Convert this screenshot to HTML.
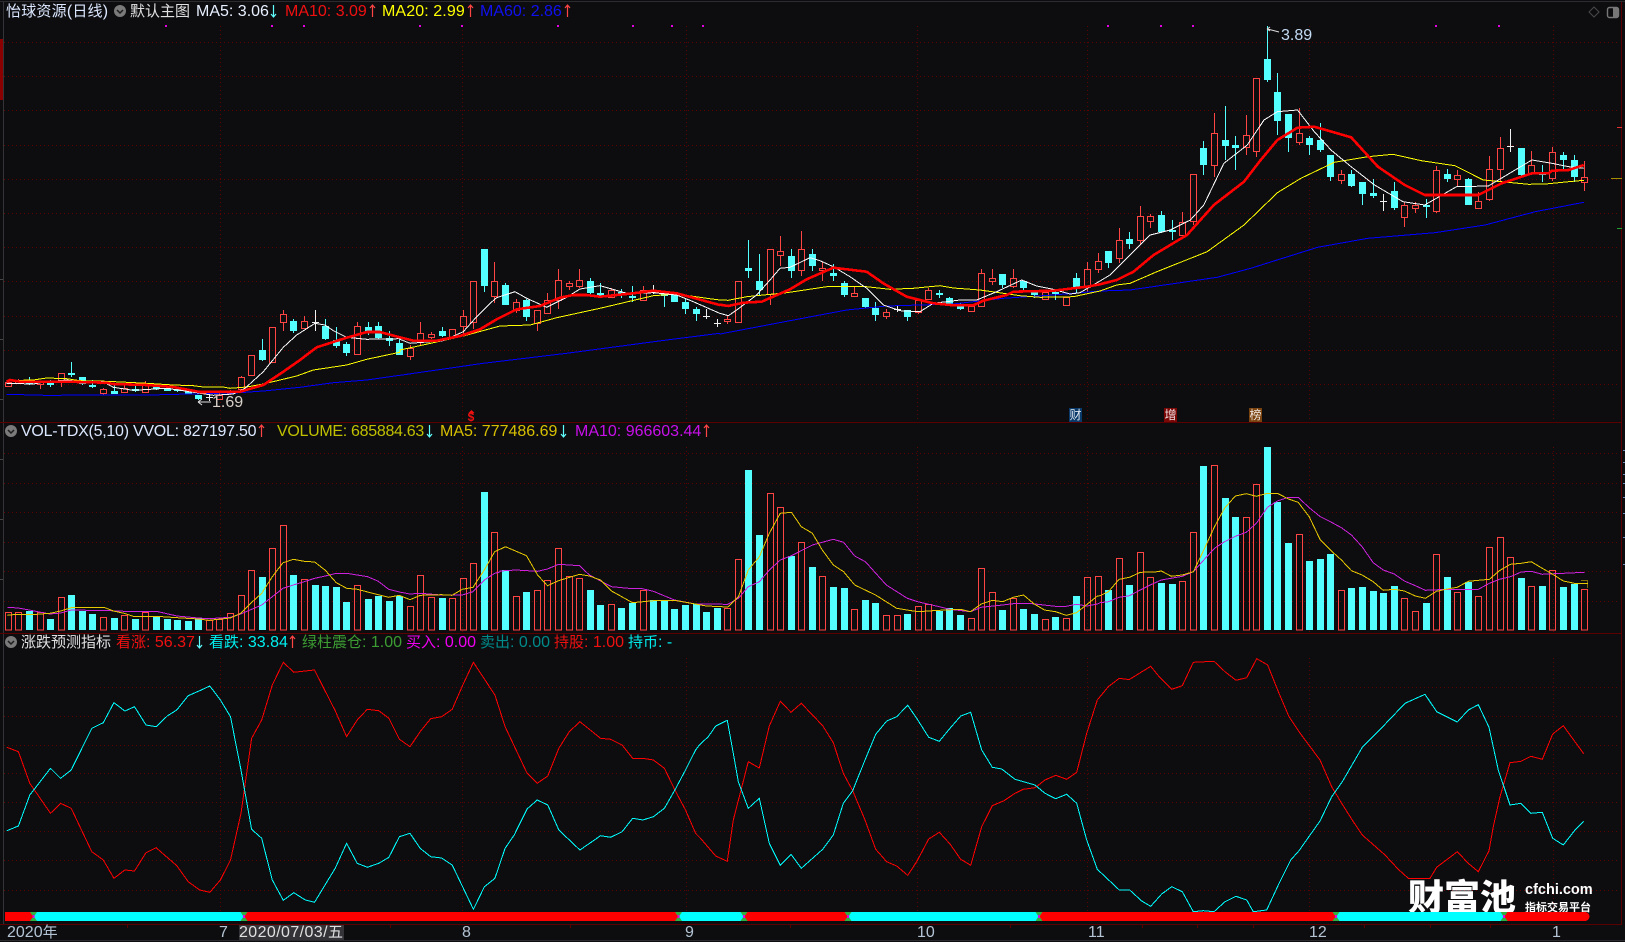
<!DOCTYPE html>
<html><head><meta charset="utf-8"><title>K线</title>
<style>
html,body{margin:0;padding:0;background:#0d0d10;width:1625px;height:942px;overflow:hidden}
#w{position:relative;width:1625px;height:942px;overflow:hidden;font-family:"Liberation Sans","Noto Sans CJK SC",sans-serif;font-size:16px}
svg{position:absolute;left:0;top:0}
.t{position:absolute;white-space:nowrap;line-height:18px;height:18px}
.t i{font-style:normal;font-size:15px}
.ax{color:#b4c4d4}
</style></head><body><div id="w">
<svg id="s" width="1625" height="942" viewBox="0 0 1625 942"></svg>
<div class="t" style="left:6px;top:3px;color:#dce8ff;letter-spacing:.2px"><i>怡球资源</i>(<i>日线</i>)</div>
<div class="t" style="left:130px;top:3px;color:#e0e0e0"><i>默认主图</i></div>
<div class="t" style="left:196px;top:3px;color:#e8f0ff">MA5: 3.06</div>
<div class="t" style="left:285px;top:3px;color:#f01010">MA10: 3.09</div>
<div class="t" style="left:382px;top:3px;color:#ffff00;letter-spacing:.1px">MA20: 2.99</div>
<div class="t" style="left:480px;top:3px;color:#1010f0">MA60: 2.86</div>
<div class="t" style="left:21px;top:423px;color:#dce8ff;letter-spacing:-.26px">VOL-TDX(5,10) VVOL: 827197.50</div>
<div class="t" style="left:277px;top:423px;color:#c0c000;letter-spacing:-.3px">VOLUME: 685884.63</div>
<div class="t" style="left:440px;top:423px;color:#d8c000">MA5: 777486.69</div>
<div class="t" style="left:575px;top:423px;color:#c810e8">MA10: 966603.44</div>
<div class="t" style="left:21px;top:634px;color:#e0e0e0"><i>涨跌预测指标</i></div>
<div class="t" style="left:116px;top:634px;color:#f01010"><i>看涨</i>: 56.37</div>
<div class="t" style="left:209px;top:634px;color:#00f0f0"><i>看跌</i>: 33.84</div>
<div class="t" style="left:302px;top:634px;color:#3c9c32"><i>绿柱震仓</i>: 1.00</div>
<div class="t" style="left:406px;top:634px;color:#f000f0"><i>买入</i>: 0.00</div>
<div class="t" style="left:480px;top:634px;color:#008a8a"><i>卖出</i>: 0.00</div>
<div class="t" style="left:554px;top:634px;color:#f01010"><i>持股</i>: 1.00</div>
<div class="t" style="left:628px;top:634px;color:#00f0f0"><i>持币</i>: -</div>
<div class="t" style="left:1281px;top:27px;color:#c4dcf4">3.89</div>
<div class="t" style="left:212px;top:394px;color:#d8d0c8">1.69</div>
<div class="t" style="left:471px;top:408px;color:#f01010;font-size:12px;font-weight:bold;transform:translateX(-50%)">$</div>
<div class="t" style="left:1069px;top:408px;width:13px;height:14px;line-height:14px;text-align:center;background:#0a3a6a;color:#e0e8f0;font-size:12px">财</div>
<div class="t" style="left:1164px;top:408px;width:13px;height:14px;line-height:14px;text-align:center;background:#7a0606;color:#f0e0e0;font-size:12px">增</div>
<div class="t" style="left:1249px;top:408px;width:13px;height:14px;line-height:14px;text-align:center;background:#7a420e;color:#f0e8e0;font-size:12px">榜</div>
<div class="t" style="left:1408px;top:875px;height:40px;line-height:40px;color:#fff;font-size:36px;font-weight:900;font-family:'Noto Sans CJK SC',sans-serif;z-index:1">财富池</div>
<div class="t" style="left:1525px;top:881px;color:#fff;font-size:14.5px;font-weight:bold;z-index:1">cfchi.com</div>
<div class="t" style="left:1525px;top:898px;color:#fff;font-size:11px;font-weight:bold;font-family:'Noto Sans CJK SC',sans-serif;z-index:1">指标交易平台</div>
<svg id="b" width="1625" height="942" viewBox="0 0 1625 942" style="z-index:2"></svg>
<div class="t ax" style="left:7px;top:924px;z-index:3">2020<i>年</i></div>
<div class="t ax" style="left:219px;top:924px;z-index:3">7</div>
<div class="t" style="left:239px;top:925px;width:105px;height:15px;line-height:15px;background:#333338;color:#e0e0e0;z-index:3;letter-spacing:.4px">2020/07/03/<i>五</i></div>
<div class="t ax" style="left:462px;top:924px;z-index:3">8</div>
<div class="t ax" style="left:685px;top:924px;z-index:3">9</div>
<div class="t ax" style="left:917px;top:924px;z-index:3">10</div>
<div class="t ax" style="left:1088px;top:924px;z-index:3">11</div>
<div class="t ax" style="left:1309px;top:924px;z-index:3">12</div>
<div class="t ax" style="left:1552px;top:924px;z-index:3">1</div>
<script>
var X=function(i){return 7.8+10.58*i};
var s=document.getElementById('s'),b=document.getElementById('b');
var out=[],bo=[];
function P(d,st,w,extra,arr){(arr||out).push('<path d="'+d+'" fill="none" stroke="'+st+'" stroke-width="'+w+'" shape-rendering="crispEdges" '+(extra||'')+'/>')}
function F(d,f,arr){(arr||out).push('<path d="'+d+'" fill="'+f+'" shape-rendering="crispEdges"/>')}
// grid
var g='',gy=[];
for(var k=0;k<=10;k++)gy.push(42+34.2*k);
[453,482.6,512,541.5,571,600.5,686.7,715.6,744.5,773.4,802.3,831.2,860.1,890].forEach(function(y){gy.push(y)});
gy.forEach(function(y){g+='M4 '+(Math.round(y)+.5)+'H1620'});
P(g,'#5c0000',1,'stroke-dasharray="1 3"');
var v='';
[219.5,462,685.5,917,1087,1309,1552.7].forEach(function(x){var a=Math.round(x)+.5;v+='M'+a+' 26V422M'+a+' 447V633M'+a+' 658V912'});
P(v,'#5c0000',1,'stroke-dasharray="1 3"');
// borders
P('M0 1.5H1625M0 940.5H1625','#2c2c30',1);
P('M3.5 2V924','#333338',1);
P('M0 422.5H1622M0 633.5H1622M0 924.5H1622M1621.5 2V924','#5a0000',1);
F('M0 39h3v61h-3z','#8a0000');
P('M0 279.5h3M0 339.5h3M0 399.5h3M0 459.5h3M0 519.5h3M0 579.5h3','#444',1);
P('M127.5 924v4M315.5 924v4M390.5 924v4M570.5 924v4M790.5 924v4M1010.5 924v4M1142.5 924v4M1197.5 924v4M1253.5 924v4M1364.5 924v4M1430.5 924v4M1490.5 924v4','#5a0000',1);
P('M1623 450.5h2M1623 462.5h2M1623 474.5h2M1623 483.5h2M1623 497.5h2M1623 513.5h2M1623 537.5h2M1623 564.5h2','#6a88b8',1);
P('M1617 127.5h5','#e03030',1);P('M1611 178.5h11','#a09000',1);P('M1617 228.5h5','#20a030',1);
// purple dots
var pd='';[166,271.6,303.7,420,462,558,633,672,703,1108,1161,1193,1436,1499].forEach(function(x){pd+='M'+Math.round(x-1)+' 25h2v2h-2z'});
F(pd,'#e000e0');
// volume
var V=[];
function vol(off,start,a){for(var i=0;i<a.length;i++)V[start+i]=[a[i][0],off+a[i][1]/3]}
vol(380,0,[[0,697],[0,697],[1,693],[0,697],[1,717],[0,652],[1,645],[1,693],[1,702],[0,712],[1,714],[0,705],[1,717],[0,695],[1,710],[1,717],[1,720],[1,723],[1,714],[0,720],[0,717],[0,700],[0,646],[0,571],[1,591],[0,505],[0,436],[1,585],[0,598],[1,615],[1,618],[1,621],[1,666],[0,616],[1,657],[1,648],[1,663],[1,648],[0,679],[0,586],[0,652],[1,654],[0,655],[0,595],[0,550],[1,336],[0,455]]);
vol(430,47,[[1,420],[0,499],[1,486],[0,481],[0,451],[0,355],[0,439],[0,445],[1,480],[1,525],[0,523],[1,534],[1,519],[0,481],[1,510],[1,513],[1,537],[1,525],[1,521],[1,546],[1,533],[0,535],[0,388],[1,120],[1,315],[0,190],[0,232],[1,378],[0,337],[1,411],[0,439],[1,471],[1,474],[0,538],[1,510],[1,519],[0,556],[0,556],[1,552],[0,529],[0,521],[1,542],[1,534],[1,555],[0,565],[0,415],[0,487],[1,540],[0,505],[1,537],[1,552],[0,568],[1,561],[0,565],[1,498],[0,442],[0,439]]);
vol(420,104,[[1,510],[0,415],[1,495],[0,397],[0,472],[1,489],[1,492],[0,484],[0,337],[1,138],[0,136],[1,234],[1,291],[0,292],[0,193],[1,81],[1,246],[1,369],[0,343],[1,423],[1,417],[1,402],[0,511],[1,504],[1,501],[1,513],[1,519],[1,498],[0,535],[0,574],[1,549],[0,403],[1,471],[0,517],[1,486],[0,529],[0,382],[0,352],[0,412],[1,474],[0,499],[1,498],[0,451],[1,501],[1,491],[0,508]]);
var vr='',vc='';
for(var i=0;i<150;i++){if(!V[i])continue;var xc=Math.round(X(i)),t=Math.round(V[i][1]);
 if(V[i][0]) vc+='M'+(xc-3)+' '+t+'h7V630h-7z';
 else vr+='M'+(xc-3+.5)+' '+(t+.5)+'h6V630h-6z';}
F(vc,'#54ffff');P(vr,'#ff4444',1.2);
// candles
var C=[];
function cd(off,start,a){for(var i=0;i<a.length;i++){var r=a[i];C[start+i]=[r[0],off+r[1]/3,off+r[2]/3,off+r[3]/3,off+r[4]/3]}}
cd(240,0,[[0,427,437,425,438],[0,420,430,418,432],[1,427,433,412,434],[0,427,433,422,446],[1,428,431,420,440],[0,400,425,400,440],[1,399,405,366,410],[1,412,432,412,434],[1,435,439,421,445],[0,448,458,445,465],[1,453,461,433,461],[0,444,457,436,460],[1,447,452,438,455],[0,436,455,423,455],[1,440,444,432,451],[1,445,452,438,452],[1,448,452,440,456],[1,453,461,453,461],[1,465,476,465,480],[2,470,470,462,482],[0,466,478,460,480],[0,455,460,450,465],[0,411,448,408,450],[0,346,406,346,408],[1,330,360,297,362],[0,262,367,262,370],[0,223,247,210,273],[1,244,274,238,278],[0,244,263,228,268],[2,247,247,210,272],[1,258,297,237,300],[1,300,318,262,325],[1,313,339,305,348],[0,259,341,247,341],[1,260,278,246,285],[1,258,294,246,296],[1,294,302,272,318],[1,310,345,295,345]]);
cd(220,38,[[0,385,407,376,420],[0,340,366,306,375],[0,341,350,336,358],[1,333,348,321,352],[0,327,350,327,352],[0,287,319,270,345],[0,184,305,184,328],[1,87,197,87,216],[0,184,227,126,250],[1,195,255,189,255],[0,247,269,237,278],[1,240,291,236,303],[0,271,309,271,333],[0,241,278,220,282],[0,181,239,148,268],[0,190,197,182,210],[0,181,197,148,204],[1,183,219,174,222],[1,220,228,189,230],[0,211,231,203,232],[1,215,224,208,233],[1,228,231,198,245],[0,210,241,198,244],[2,216,216,195,222],[1,222,229,220,262],[1,224,246,222,247],[1,246,267,238,283],[1,267,282,262,303],[2,287,287,268,297],[2,308,308,296,320],[0,298,304,288,312],[0,184,305,184,305],[1,144,153,60,174],[1,183,210,102,228],[0,88,222,88,255],[0,94,104,48,138],[1,108,153,87,173],[0,88,149,33,168],[1,102,138,87,153],[0,144,149,126,183],[1,160,168,132,183],[1,189,225,183,231],[0,220,228,198,230],[1,234,262,234,265],[1,264,285,246,303],[0,277,287,267,296],[2,268,268,258,276],[1,271,290,271,303],[0,240,277,240,281],[0,211,236,204,240],[1,219,224,211,234],[1,234,252,231,256],[1,258,266,250,270],[0,258,273,252,275],[0,160,258,148,260],[0,175,182,148,195],[1,162,195,162,204],[0,175,197,148,205],[1,183,205,183,210],[1,215,225,210,233],[0,217,237,211,239],[1,215,219,208,240],[0,232,254,232,254],[1,175,204,160,218],[0,148,200,126,215],[0,124,146,99,159]]);
cd(0,104,[[1,753,790,753,805],[0,721,773,685,790],[1,717,733,697,747],[0,649,719,618,733],[0,649,662,642,684],[1,645,697,633,700],[1,690,696,660,720],[0,667,704,636,704],[0,523,662,523,675],[1,444,495,423,525],[0,400,494,340,530],[1,420,438,318,480],[1,435,444,408,510],[0,406,440,345,465],[0,235,452,235,470],[1,177,240,78,245],[1,276,363,220,405],[1,342,414,342,456],[0,400,425,325,435],[1,414,435,408,465],[1,420,450,370,456],[1,465,531,465,543],[0,522,539,510,552],[1,522,558,510,560],[1,546,582,546,615],[1,579,587,537,594],[2,603,603,582,633],[1,573,625,546,630],[0,616,650,606,681],[0,616,625,606,640],[1,615,618,597,654],[0,511,633,498,639],[1,522,537,507,546],[0,526,538,510,558],[1,537,615,534,615],[0,604,625,576,625],[0,508,597,468,603],[0,445,508,411,543],[2,437,437,387,456],[1,444,525,444,529],[0,496,520,453,525],[1,519,522,495,546],[0,457,534,441,543],[1,465,480,456,510],[1,481,531,465,545],[0,531,545,483,573]]);
var cR='',cC='',wR='',wC='',wW='';
for(var i=0;i<150;i++){var c=C[i];if(!c)continue;var xc=Math.round(X(i)),tp=Math.round(c[1]),bt=Math.round(c[2]),hi=Math.round(c[3]),lo=Math.round(c[4]);var xw=xc+.5;
 if(c[0]==0){wR+='M'+xw+' '+hi+'V'+tp+'M'+xw+' '+bt+'V'+lo;cR+='M'+(xc-3+.5)+' '+(tp+.5)+'h6V'+(bt+.5)+'h-6z';}
 else if(c[0]==1){wC+='M'+xw+' '+hi+'V'+lo;cC+='M'+(xc-3)+' '+tp+'h7V'+Math.max(bt,tp+2)+'h-7z';}
 else{wW+='M'+xw+' '+hi+'V'+lo+'M'+(xc-3)+' '+(tp+.5)+'h7';}}
P(wC,'#54ffff',1);F(cC,'#54ffff');P(wR,'#ff4444',1);P(cR,'#ff4444',1.2);P(wW,'#f0f0f0',1);
// line helper
function J(list){var r=[];list.forEach(function(l){var p=l[3];for(var i=0;i<p.length;i+=2){var x=l[0]+p[i]/l[2],y=l[1]+p[i+1]/3;if(x>=l[4]&&x<l[5])r.push(x.toFixed(1)+' '+y.toFixed(1))}});return 'M'+r.join('L')}
function M(a,b,c,d){return J([[0,240,3,a,0,400],[400,220,3,b,400,720],[720,220,3,c,720,1100],[1100,0,2.987,d,1100,1700]])}
var lb=M([20,463,135,466,450,465,720,458,800,452,900,442,1000,428,1100,420,1199,406],[0,466,250,430,500,400,800,360,959,340],[0,342,300,285,380,270,500,258,700,252,850,235,1000,225,1199,210],[0,873,90,870,350,832,450,805,650,742,800,715,1000,698,1150,675,1300,635,1445,607]);
var ly=M([20,422,100,420,140,414,200,416,240,422,320,424,440,430,520,435,580,437,610,441,670,441,690,445,740,441,790,432,890,408,940,390,1040,375,1100,358,1199,337],[0,390,100,368,190,348,300,318,390,315,470,293,600,265,760,227,830,222,920,235,959,240],[0,240,25,241,80,230,200,218,320,200,440,200,510,208,580,205,660,197,700,204,780,210,900,227,960,232,1060,230,1140,218,1199,195],[0,873,50,855,90,850,170,815,320,755,430,675,530,578,600,535,700,487,800,470,875,463,960,482,1060,497,1145,540,1200,545,1280,553,1330,552,1400,545,1445,541]);
var lw=M([20,430,100,432,140,425,200,420,240,425,310,425,340,442,400,451,500,445,590,458,640,466,700,462,735,445,790,395,850,322,890,285,945,250,975,255,1000,272,1040,292,1100,298,1199,296],[0,358,30,370,130,362,190,335,230,290,270,250,290,233,345,215,380,235,440,262,500,232,540,207,600,197,680,220,760,218,830,225,880,245,959,280],[0,280,25,287,50,270,110,225,150,180,180,145,210,142,270,113,300,122,340,140,390,170,440,205,490,255,540,272,600,275,640,250,720,240,770,240,830,215,905,180,950,198,1000,208,1050,222,1080,218,1140,175,1165,165,1199,130],[0,843,30,825,150,705,210,690,270,660,310,615,370,490,440,435,490,360,530,335,590,330,640,395,690,450,750,500,820,555,905,605,970,615,1065,560,1160,558,1290,480,1350,490,1400,500,1445,505]);
var lr=M([20,425,30,420,60,425,200,425,320,428,340,432,440,435,520,441,600,456,720,455,790,435,850,395,900,360,950,322,1040,293,1100,276,1140,276,1199,292],[0,352,40,362,110,362,180,348,240,328,290,298,350,268,420,258,480,233,520,225,560,225,600,230,700,220,760,212,830,220,959,255],[0,254,25,258,70,248,125,245,210,208,260,178,340,143,440,155,490,190,560,230,640,250,700,256,760,256,790,242,860,225,880,215,1000,212,1100,200,1199,178],[0,853,50,840,100,815,160,765,260,705,340,615,430,545,480,480,530,420,590,383,640,380,750,412,830,500,910,555,970,585,1130,585,1200,550,1290,520,1340,520,1350,512,1400,510,1445,495]);
P(lb,'#0000ff',1);P(ly,'#ffff00',1);P(lw,'#f8f8f8',1);
P(lr,'#ff0000',2.6,'stroke-linejoin="round"');
// vol lines
function VL(a,b,c){return J([[0,380,3,a,0,500],[500,430,2.529,b,500,1100],[1100,420,2.987,c,1100,1700]])}
var vy=VL([22,706,50,703,110,703,150,700,182,693,214,683,247,683,315,683,340,693,373,700,403,710,469,709,531,713,595,717,627,721,691,714,722,700,754,668,785,640,817,590,849,548,880,538,913,544,944,546,976,571,1009,608,1040,625,1072,628,1103,636,1135,644,1166,652,1198,646,1230,659,1261,646,1324,644,1356,646,1387,628,1419,622,1453,570,1484,515,1499,508],[0,358,14,350,67,377,95,435,120,467,148,452,201,433,226,438,254,450,282,483,335,518,388,512,441,511,494,522,522,528,576,531,603,500,628,420,656,380,681,310,709,250,737,247,762,290,790,310,815,360,843,405,869,425,897,465,950,495,1003,535,1056,545,1111,541,1164,538,1190,545,1217,522,1245,511,1271,515,1298,502,1324,495,1351,522,1377,540,1405,545,1432,556,1458,548,1511,498],[0,527,25,515,57,478,88,472,120,457,165,456,183,453,213,469,246,465,279,455,310,390,342,320,372,265,404,228,437,221,467,229,500,220,530,220,563,237,592,247,625,290,658,360,688,390,721,420,751,452,783,465,816,485,846,511,879,508,909,513,942,528,972,535,1005,514,1037,507,1067,502,1100,484,1130,481,1163,478,1193,452,1226,433,1258,430,1288,425,1321,445,1351,462,1384,483,1417,490,1447,490]);
var vm=VL([22,682,55,684,88,690,118,696,150,702,182,699,214,690,330,692,373,694,469,694,531,708,595,714,627,716,691,712,722,702,785,675,817,650,849,625,880,615,913,605,944,595,976,588,1009,580,1040,580,1103,590,1135,604,1166,628,1198,636,1230,642,1261,640,1324,645,1387,645,1419,635,1453,600,1484,580,1499,576],[0,423,40,420,95,424,120,417,148,403,201,407,226,435,282,470,335,476,360,476,388,484,441,510,494,522,576,523,603,505,628,470,656,455,681,420,709,390,737,377,790,345,843,328,869,337,897,378,924,395,977,465,1030,505,1056,515,1111,530,1137,538,1190,545,1217,532,1271,525,1298,521,1337,520,1405,529,1432,529,1458,523,1485,528,1511,522],[0,548,25,545,57,532,88,527,120,510,150,495,183,480,246,469,279,455,310,420,342,385,372,365,404,349,437,337,467,310,500,262,530,243,563,232,592,232,625,263,658,290,688,305,721,323,751,345,783,380,816,428,846,450,879,462,909,483,942,497,972,511,1037,508,1130,508,1163,490,1193,478,1226,470,1258,456,1288,454,1321,463,1447,457]);
P(vm,'#cc22dd',1);P(vy,'#e8c800',1);
P('M1581.5 580.5h6v8','#e8c800',1,'stroke-dasharray="1 1"');
P('M1579 583.5h9','#e8c800',1);
// indicator
function IL(a,b,c){return J([[0,620,2.178,a,0,700],[700,640,3,b,700,1127],[1125,640,3,c,1127,1700]])}
var ir=IL([15,382,40,395,65,490,110,580,132,550,155,565,200,695,225,720,248,775,272,750,293,753,318,698,340,683,385,737,410,785,435,810,457,817,480,780,502,720,525,580,548,355,570,300,593,195,617,127,640,157,685,150,730,272,755,350,778,300,800,268,825,272,847,295,870,358,893,380,915,335,938,296,962,290,985,268,1008,195,1031,127,1078,225,1100,320,1148,460,1170,490,1193,468,1217,385,1240,335,1263,305,1308,355,1330,358,1355,375,1378,415,1400,415,1423,420,1447,445,1470,510,1493,570,1515,640],[0,593,47,648,82,664,100,540,145,365,178,384,208,258,241,184,273,217,304,190,368,257,400,308,430,400,458,452,495,540,527,628,560,665,590,678,623,706,650,665,686,597,718,577,750,612,782,658,812,676,845,560,877,497,912,482,945,460,970,448,1005,443,1035,420,1067,406,1100,418,1130,397,1160,280,1192,180,1225,140,1258,115,1280,118],[14,118,77,79,105,113,140,148,172,137,205,67,267,64,300,95,333,121,365,113,395,56,428,75,460,155,492,230,522,275,585,360,620,440,650,490,685,545,712,585,780,645,820,688,850,715,915,715,935,682,997,635,1030,670,1060,695,1092,632,1105,560,1125,470,1155,368,1188,364,1218,349,1252,358,1283,282,1315,257,1376,341]);
var ic=IL([15,632,40,618,65,525,110,445,132,475,155,450,200,325,225,308,248,248,272,273,293,260,318,315,340,320,365,287,385,270,410,227,435,212,457,198,480,240,502,290,525,450,548,628,570,655,593,780,617,841,640,818,665,840,685,847,730,745,755,670,778,730,800,742,825,730,847,712,870,650,893,640,915,685,938,710,962,714,985,735,1031,868,1055,800,1078,775,1100,685,1120,645,1148,567,1170,540,1193,555,1217,630,1263,690,1308,647,1330,652,1355,635,1378,595,1400,600,1423,590,1447,565,1470,510,1493,450,1515,390],[0,313,25,290,47,258,82,241,100,340,115,425,145,505,178,475,208,610,241,676,273,643,304,685,368,628,400,585,430,490,458,452,495,360,527,283,560,243,590,230,623,196,650,235,686,292,718,304,750,265,782,228,812,217,845,330,877,382,905,387,945,418,1005,435,1035,460,1067,476,1100,463,1130,490,1160,600,1192,688,1258,750,1280,750],[14,750,50,783,77,799,110,762,140,740,172,755,205,815,235,812,267,815,300,785,333,769,365,780,385,815,425,810,460,735,497,660,522,632,585,543,620,470,652,425,712,322,780,253,840,190,900,163,935,215,997,246,1030,210,1060,194,1092,262,1120,390,1155,495,1188,490,1218,520,1252,517,1283,595,1315,615,1350,570,1376,544]);
P(ir,'#ff0000',1);P(ic,'#00ffff',1);
// peak labels
out.push('<path d="M1267 29l3-2M1267 29l3 2M1267.5 29L1279 32" stroke="#e0e0e0" fill="none" stroke-width="1"/>');
out.push('<path d="M198 402l4-3M198 402l4 3M198 402H211" stroke="#e0e0e0" fill="none" stroke-width="1"/>');
// arrows
function AR(x,y,up,col){var h=up?y:y+12,t=up?y+12:y;var d=up?3:-3;out.push('<path d="M'+x+'.5 '+h+'V'+t+'M'+(x-2)+' '+(h+d)+'L'+x+'.5 '+h+'L'+(x+3)+' '+(h+d)+'" stroke="'+col+'" fill="none" stroke-width="1.2"/>')}
AR(273,5,false,'#60ffff');AR(372,5,true,'#ff4444');AR(470,5,true,'#ff4444');AR(567,5,true,'#ff4444');
AR(261,425,true,'#ff4444');AR(429,425,false,'#60ffff');AR(563,425,false,'#60ffff');AR(706,425,true,'#ff4444');
AR(199,636,false,'#60ffff');AR(292,636,true,'#ff4444');
// circle icons
function IC(x,y){out.push('<circle cx="'+x+'" cy="'+y+'" r="6" fill="#7a7a7a"/><path d="M'+(x-3)+' '+(y-1)+'l3 3l3 -3" stroke="#1c1c1c" stroke-width="1.5" fill="none"/>')}
IC(120,11);IC(11,431);IC(11,642);
// top right icons
out.push('<path d="M1594 7l5 5l-5 5l-5 -5z" fill="none" stroke="#4a4a4a"/>');
out.push('<rect x="1607.5" y="7.5" width="11" height="10" rx="2" fill="none" stroke="#777" stroke-width="1.4"/><rect x="1613" y="8" width="5" height="9" fill="#777"/>');
// small $ arrow
out.push('<path d="M471.5 410l-3 3h6z" fill="#f01010"/>');
s.innerHTML=out.join('');
// bottom bar above logo
function R(x,w,c){bo.push('<rect x="'+x+'" y="912" width="'+w+'" height="9" fill="'+c+'"/>')}
[[5,28,'#ff0000'],[34,210,'#00ffff'],[245,433,'#ff0000'],[679,65,'#00ffff'],[745,103,'#ff0000'],[849,190,'#00ffff'],[1040,295,'#ff0000'],[1337,167,'#00ffff'],[1505,81,'#ff0000']].forEach(function(a){R(a[0],a[1],a[2])});
bo.push('<circle cx="1585" cy="916.5" r="4.5" fill="#ff0000"/>');
[33.5,244,678.5,744,848,1039,1336,1504].forEach(function(x){bo.push('<path d="M'+(x-3.5)+' 912h7l-3 4.5l3 4.5h-7l3 -4.5z" fill="#30b040"/><rect x="'+(x-1)+'" y="915" width="2" height="3" fill="#e000e0"/>')});
b.innerHTML=bo.join('');
</script>
</div></body></html>
